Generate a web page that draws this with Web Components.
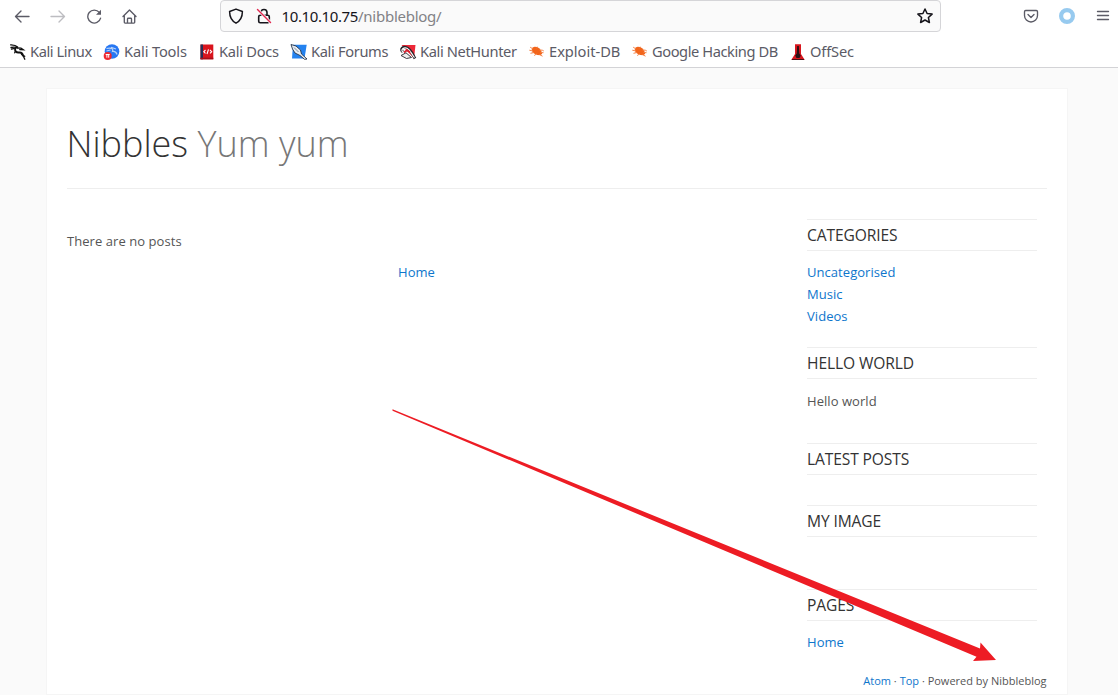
<!DOCTYPE html>
<html lang="en"><head><meta charset="utf-8"><title>Nibbles - Yum yum</title>
<style>html,body{margin:0;height:100%;overflow:hidden;background:#fafafa}</style></head><body>
<nibble-window></nibble-window>
<script>
const define=(name,html)=>customElements.define(name,class extends HTMLElement{
  constructor(){super();const t=document.createElement('template');t.innerHTML=html;this.attachShadow({mode:'open'}).append(t.content.cloneNode(true));}
});

define('nav-bar',`<style>
:host{display:flex;align-items:center;height:32px;padding-left:14px;box-sizing:border-box;font:15px/20px "Noto Sans",sans-serif;color:#5b5b66}
svg{display:block;width:16px;height:16px;fill:none;stroke:currentColor;stroke-width:1.35;stroke-linecap:round;stroke-linejoin:round;flex:none}
.nav{display:flex;gap:20px;width:206px}
.url{display:flex;align-items:center;box-sizing:border-box;width:721px;height:32px;border:1px solid #d5d5d8;border-radius:4px;background:#fafafa;padding:0 7px;color:#15141a}
.url .lock{margin-left:12px}.addr{margin-left:9.500px;white-space:pre;flex:1;letter-spacing:-.38px}.addr span{color:#828286;letter-spacing:-.260px}
.tools{display:flex;gap:20px;margin-left:82px}
</style>
<div class="nav">
<svg viewBox="0 0 16 16"><path d="M15 8.500H1.500M7 3 1.500 8.500 7 14"/></svg>
<svg viewBox="0 0 16 16" style="color:#bdbdc1"><path d="M1 8.500h13.500M9 3l5.500 5.500L9 14"/></svg>
<svg viewBox="0 0 16 16"><path d="M14.600 10.200A6.500 6.500 0 1 1 13.300 4.400"/><path d="M15 1.800v5H10z" fill="currentColor" stroke="none"/></svg>
<svg viewBox="0 0 16 16"><path d="M1 8.500 7.500 2 14 8.500M2.300 7.700v6.600q0 .8.800.8h8.800q.8 0 .8-.8V7.700M5.500 15v-4q0-.8.800-.8h2.400q.8 0 .8.800v4"/></svg>
</div>
<div class="url">
<svg viewBox="0 0 16 16"><path stroke-width="1.5" d="M8 1.100 14.400 3.500C14.400 8.500 13 12.500 8 15.200 3 12.500 1.600 8.500 1.600 3.500z"/></svg>
<svg class="lock" viewBox="0 0 16 16"><path stroke-width="1.600" d="M5 7V4.500a3 3 0 0 1 6 0V7M4.200 7.200h7.600q1.500 0 1.500 1.500v4.600q0 1.500-1.500 1.500H4.200q-1.500 0-1.500-1.500V8.700q0-1.500 1.500-1.500z"/><path d="m1.500 1.500 13 13" stroke="#fafafa" stroke-width="3"/><path d="m1.500 1.500 13 13" stroke="#e22850" stroke-width="1.400"/></svg>
<div class="addr">10.10.10.75<span>/nibbleblog/</span></div>
<svg viewBox="0 0 16 16"><path stroke-width="1.500" d="m8 1 2.100 4.500 5 .6-3.700 3.400 1 5L8 12l-4.400 2.500 1-5L.9 6.100l5-.6z"/></svg>
</div>
<div class="tools">
<svg viewBox="0 0 16 16"><path d="M2.700 2.500h10.600q1.200 0 1.200 1.200v3.800a6.500 6.500 0 0 1-13 0V3.700q0-1.200 1.200-1.200zM5 6.500l3 3 3-3"/></svg>
<svg viewBox="0 0 16 16"><circle cx="8" cy="8" r="5.900" stroke="#97caef" stroke-width="4.200"/></svg>
<svg viewBox="0 0 16 16"><path d="M2.500 3.500h11M2.500 7.500h11M2.500 11.500h11"/></svg>
</div>`);

define('bookmark-item',`<style>
:host{display:flex;align-items:center;gap:4px;height:20px;font:14.67px/20px "Noto Sans",sans-serif;color:#5b5b66;white-space:nowrap;flex:none}
span{letter-spacing:var(--track,0);margin-top:-2px}
::slotted(svg){width:16px;height:16px;display:block;flex:none;overflow:visible}
</style><slot name="icon"></slot><span><slot></slot></span>`);

const bug='<svg slot="icon" viewBox="0 0 16 16"><path d="m3.500 3.500 2.200-.8 2.500.4 2.300 1.500 1.800 2.300.9 2.800-1.800 1.500-3.100-.1-2.500-1-2.200-1.900-.9-2.500z" fill="#f2651b"/><path d="m4 5-2.800-1.800M4 7 .3 6.200M5 8.500l-3.500.8M7.500 10l-2.300 1.500M10.500 6l2.800.2 1.500.8M11.500 8.500l3 .2M10.500 10.500l3 1.700M7.500 4l1.200-1" fill="none" stroke="#f58347" stroke-width="1"/></svg>';
define('bookmark-bar',`<style>:host{display:flex;gap:12px;padding:10px 0 0 10px;box-sizing:border-box;border-bottom:1px solid #d3d3d6}</style>
<bookmark-item style="width:82px;--track:-.42px"><svg slot="icon" viewBox="0 0 16 16" fill="none" stroke="#111" stroke-linecap="round"><path stroke-width="1.300" d="M.6.900c3 .2 5 .2 7 2M1 3.500c2.500-.6 4.500-.5 6.300.2M1.500 5.200l3-.9"/><path stroke-width="1.900" d="M5.500 4C4 7 6.500 8.800 9 8.500c3-.3 3.700 1.400 4 3"/><path stroke-width="1.300" d="m7 4 4 .2 2.300 1.500-3.600-.1M11.500 10.500l3.300 1.800M12.800 11l2 4.200M5.500 7l-.8 1.800"/></svg>Kali Linux</bookmark-item>
<bookmark-item style="width:83px;--track:-.15px"><svg slot="icon" viewBox="0 0 16 16"><circle cx="8" cy="7.500" r="7.300" fill="#2777f3"/><path d="M2.500 4.500c6-1 7 .8 6 3 3-.5 4 1 4.500 3M7 3.200l5 1.800M2.500 7l4-1" fill="none" stroke="#b7d2f7" stroke-width="1.200"/><circle cx="3.700" cy="12" r="4" fill="#ee2830"/><path d="M1.700 10.500h4M2.900 10.500v3.200M4.700 10.500v3.200" stroke="#fff" fill="none"/></svg>Kali Tools</bookmark-item>
<bookmark-item style="width:80px;--track:-.28px"><svg slot="icon" viewBox="0 0 16 16"><path d="M1.500.5h12.800v14.800H1.500z" fill="#d9141d"/><path d="M1.500.5H4v14.800H1.500z" fill="#273057"/><path d="M1.500 13.700h12.800v1.600H1.500z" fill="#a80e19"/><path d="M6.500 6 4.800 7.700l1.700 1.700M11 6l1.700 1.700L11 9.400M9.500 5.300 8 10" fill="none" stroke="#fff" stroke-width="1.100"/></svg>Kali Docs</bookmark-item>
<bookmark-item style="width:97px;--track:-.35px"><svg slot="icon" viewBox="0 0 16 16"><path d="M2 .800h13.700L13.500 14.500H1z" fill="#2482ef"/><path d="M0 .5 5 2l4.500 4 1 4 5.500 5-2.500.3L9 11.500 4 9 1.500 5z" fill="#e8edf3" stroke="#263448" stroke-width=".9"/><path d="m3 3.500 4.500 4.500" stroke="#52657f" stroke-width=".7"/></svg>Kali Forums</bookmark-item>
<bookmark-item style="width:117px;--track:-.38px"><svg slot="icon" viewBox="0 0 16 16"><path d="M1.500 1h14L14 14.500z" fill="#ed2838"/><path d="M3 8C-.5 5 3 2.500 6.500 3.500c4 1 5.500 5.500 8.500 11" fill="none" stroke="#252329" stroke-width="2.800"/><path d="M3 8.200C0 5.500 4 3 7 4.200c3.500 1.500 4.500 6 7.500 9.500" fill="none" stroke="#fff" stroke-width="1.200"/><path d="m4 8.500 3-2.300 3 2" fill="none" stroke="#d51f2e" stroke-width="1.800"/><path d="M1 11.500 6 8.800l5.500 4.700-5 1z" fill="#eee" stroke="#29262c" stroke-width=".9"/></svg>Kali NetHunter</bookmark-item>
<bookmark-item style="width:91px;--track:-.02px">${bug}Exploit-DB</bookmark-item>
<bookmark-item style="width:146px;--track:-.43px">${bug}Google Hacking DB</bookmark-item>
<bookmark-item style="--track:-.15px"><svg slot="icon" viewBox="0 0 16 16"><path d="M5 .2h6v9.800l3.800 6H1.200L5 10z" fill="#d8161e"/><path d="M7.200 2h1.600l.5 7.500 1.500 2-1.300 2.500h-3l-1.300-2.500 1.500-2z" fill="#281014"/><path d="M2 15.500h12" stroke="#4a1016"/></svg>OffSec</bookmark-item>`);

define('side-panel',`<style>
:host{display:block;font:13px/22px "Open Sans",sans-serif;color:#555}
h4{box-sizing:border-box;height:32px;margin:0;border:solid #eee;border-width:1px 0;font:400 15.600px/30px "Open Sans",sans-serif;letter-spacing:-.12px;color:#333}
.body{padding-top:var(--body-gap,10px);letter-spacing:.05px}
::slotted(a){display:block;color:#0e76cc}
</style><h4><slot name="title"></slot></h4><div class="body"><slot></slot></div>`);

define('blog-page',`<style>
:host{display:block;box-sizing:border-box;width:1022px;height:607px;margin:20px 0 0 46px;padding:0 20px;border:1px solid #f5f5f5;background:#fff;font:13px/22px "Open Sans",sans-serif;color:#555}
header{height:100px;box-sizing:border-box;padding-top:29px;border-bottom:1px solid #eee;white-space:nowrap;font:300 36px/52px "Open Sans",sans-serif;text-indent:-.5px;color:#333}
header span{color:#777}a{color:#0e76cc}
.cols{display:grid;grid-template-columns:699px 230px;gap:41px;height:481px}
main{padding-top:41px;letter-spacing:.06px}main a{display:block;text-align:center;margin-top:9px}
aside{padding-top:30px}
footer{text-align:right;font-size:11px;line-height:22px;padding-right:.500px}
</style>
<header>Nibbles <span>Yum yum</span></header>
<div class="cols"><main><div>There are no posts</div><a>Home</a></main>
<aside>
<side-panel style="height:128px"><span slot="title">CATEGORIES</span><a>Uncategorised</a><a>Music</a><a>Videos</a></side-panel>
<side-panel style="height:96px;--body-gap:11px"><span slot="title">HELLO WORLD</span>Hello world</side-panel>
<side-panel style="height:62px"><span slot="title">LATEST POSTS</span></side-panel>
<side-panel style="height:84px"><span slot="title">MY IMAGE</span></side-panel>
<side-panel><span slot="title">PAGES</span><a>Home</a></side-panel>
</aside></div>
<footer><a>Atom</a> · <a>Top</a> · Powered by Nibbleblog</footer>`);

define('pointer-arrow',`<style>:host{position:absolute;inset:0;pointer-events:none}svg{display:block}</style>
<svg width="1118" height="695"><path d="M392.500 409.300 980 648.500 980.500 642.500 996 660 973 661 976.500 656.800 392.500 410.700z" fill="#ed1c24"/></svg>`);

define('nibble-window',`<style>:host{display:block;position:relative;width:1118px;height:695px;overflow:hidden;background:#fafafa}.chrome{background:#fff;height:68px;box-sizing:border-box}nav-bar{height:32px}bookmark-bar{height:36px}</style>
<div class="chrome"><nav-bar></nav-bar><bookmark-bar></bookmark-bar></div>
<blog-page></blog-page><pointer-arrow></pointer-arrow>`);
</script></body></html>
